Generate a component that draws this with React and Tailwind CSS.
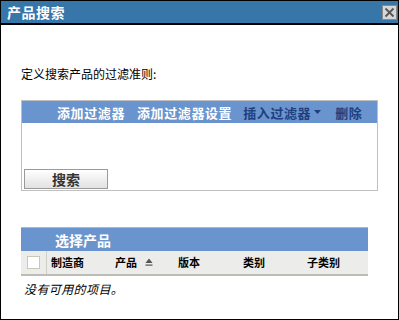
import React from "react";

const cjk = { fontFamily: '"Noto Sans CJK SC", "Liberation Sans", sans-serif' };

const SortUp = () => (
  <svg width="8" height="9" viewBox="0 0 8 9" className="ml-[8px]">
    <path d="M4 0.5 L7.5 5 L0.5 5 Z" fill="#555" />
    <rect x="0.5" y="6.5" width="7" height="1.2" fill="#555" />
  </svg>
);

const App = () => {
  const cols = [
    { label: "制造商", w: "w-[64px]" },
    { label: "产品", w: "w-[63px]", sort: true },
    { label: "版本", w: "w-[65px]" },
    { label: "类别", w: "w-[64px]" },
    { label: "子类别", w: "w-[65px]" },
  ];

  return (
    <div className="w-[399px] h-[320px] bg-white border border-black flex flex-col" style={cjk}>
      {/* title bar */}
      <div className="h-[24px] shrink-0 bg-[#3676a9] border-b-2 border-black flex items-center justify-between pl-[6px] pr-[1px]">
        <span className="text-white font-bold text-[14px] leading-none tracking-[0.5px]">产品搜索</span>
        <button className="w-[15px] h-[15px] bg-[#d6d6d6] border border-[#8a8a8a] flex items-center justify-center">
          <svg width="11" height="11" viewBox="0 0 11 11">
            <path d="M1.5 1.5 L9.5 9.5 M9.5 1.5 L1.5 9.5" stroke="#555" strokeWidth="1.8" />
          </svg>
        </button>
      </div>

      {/* body */}
      <div className="flex flex-col pl-[20px]">
        <p className="mt-[42px] text-[12px] leading-[14px] text-black">定义搜索产品的过滤准则:</p>

        {/* filter box */}
        <div className="mt-[19px] w-[357px] h-[91px] border border-[#c0c0c0] flex flex-col">
          <div className="h-[22px] bg-[#6994cd] flex items-center pl-[35px] text-[13px] tracking-[0.6px] font-bold leading-none">
            <span className="text-white">添加过滤器</span>
            <span className="text-white ml-[12px]">添加过滤器设置</span>
            <span className="text-[#1f3f80] ml-[11px] flex items-center">
              插入过滤器
              <svg width="7" height="4" viewBox="0 0 7 4" className="ml-[3px]">
                <path d="M0 0 L7 0 L3.5 4 Z" fill="#1f3f80" />
              </svg>
            </span>
            <span className="text-[#1f3f80] ml-[14px]">删除</span>
          </div>
          <div className="flex-1 flex items-end pl-[2px] pb-[1px]">
            <button className="w-[84px] h-[20px] border border-[#9a9a9a] bg-gradient-to-b from-white to-[#e2e2e2] text-[14px] font-bold text-[#333] leading-none">
              搜索
            </button>
          </div>
        </div>

        {/* products table */}
        <div className="mt-[36px] w-[347px] flex flex-col">
          <div className="h-[24px] bg-[#6994cd] border-t border-[#b8b8b0] flex items-center pl-[34px]">
            <span className="text-white text-[14px] font-bold leading-none">选择产品</span>
          </div>
          <div className="h-[25px] bg-[#ececea] border-b-2 border-[#bdbdb5] flex items-stretch text-[11px] font-bold text-black">
            <div className="w-[26px] border-r border-[#d0d0c8] flex items-center justify-center">
              <div className="w-[13px] h-[13px] bg-white border border-[#c8c8b8]" />
            </div>
            {cols.map((c) => (
              <div key={c.label} className={`${c.w} flex items-center pl-[4px] leading-none`}>
                {c.label}
                {c.sort && <SortUp />}
              </div>
            ))}
          </div>
          <p className="mt-[6px] pl-[3px] text-[12px] italic leading-[14px] text-black tracking-[0.4px]">没有可用的项目。</p>
        </div>
      </div>
    </div>
  );
};

export default App;
